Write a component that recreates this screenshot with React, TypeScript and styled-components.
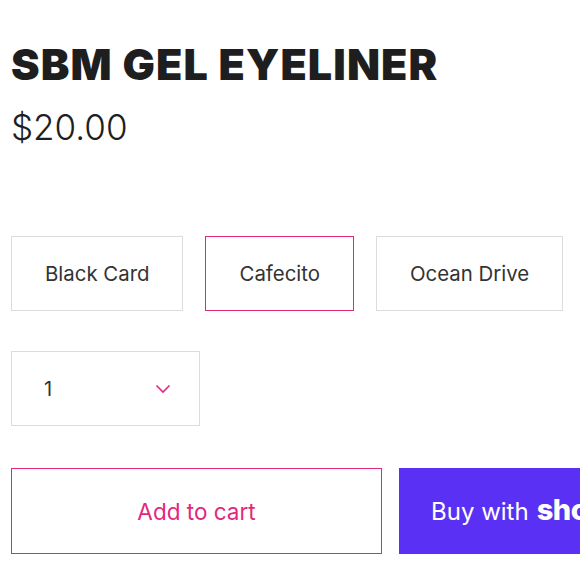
import React, { useState } from "react";
import styled, { createGlobalStyle } from "styled-components";

const GlobalStyle = createGlobalStyle`
  html, body {
    margin: 0;
    padding: 0;
    background: #fff;
    overflow: hidden;
  }
  body {
    font-family: Inter, "Noto Sans", sans-serif;
    color: #222;
  }
`;

const pink = "#e3277d";

const Page = styled.div`
  padding: 37px 11px 0;
  width: 800px;
`;

const Title = styled.h1`
  margin: 0;
  font-family: Inter, "Liberation Sans", sans-serif;
  font-weight: 900;
  font-size: 43px;
  line-height: 54px;
  letter-spacing: 1.1px;
  color: #1e1e1e;
`;

const Price = styled.div`
  margin-top: 14px;
  font-size: 35px;
  font-weight: 300;
  line-height: 44px;
  color: #1e1e1e;
`;

const Variants = styled.div`
  display: flex;
  gap: 22px;
  margin-top: 87px;
`;

const Variant = styled.button<{ $active?: boolean }>`
  height: 75px;
  padding: 0 33px;
  background: #fff;
  border: 1px solid ${({ $active }) => ($active ? pink : "#dcdcdc")};
  font-family: Inter, "Noto Sans", sans-serif;
  font-size: 20.4px;
  color: #333;
  cursor: pointer;
`;

const QtySelect = styled.div`
  margin-top: 40px;
  width: 189px;
  height: 75px;
  box-sizing: border-box;
  border: 1px solid #dcdcdc;
  display: flex;
  align-items: center;
  justify-content: space-between;
  padding: 0 28px 0 32px;
  font-size: 20px;
  color: #333;
`;

const Actions = styled.div`
  display: flex;
  gap: 17px;
  margin-top: 42px;
`;

const CartButton = styled.button`
  width: 371px;
  height: 86px;
  background: #fff;
  border: 1px solid ${pink};
  color: ${pink};
  font-family: Inter, "Noto Sans", sans-serif;
  font-size: 22.5px;
  cursor: pointer;
`;

const ShopButton = styled.button`
  width: 371px;
  height: 86px;
  padding: 0 0 0 32px;
  background: #5a31f4;
  border: none;
  color: #fff;
  font-family: Inter, "Noto Sans", sans-serif;
  font-size: 24px;
  display: flex;
  align-items: center;
  justify-content: flex-start;
  gap: 8px;
  cursor: pointer;
`;

const ShopWord = styled.span`
  font-weight: 800;
  font-size: 29px;
  letter-spacing: -0.5px;
  margin-top: -3px;
`;

const variants = ["Black Card", "Cafecito", "Ocean Drive"];

export default function App() {
  const [selected, setSelected] = useState("Cafecito");
  return (
    <Page>
      <GlobalStyle />
      <Title>SBM GEL EYELINER</Title>
      <Price>$20.00</Price>
      <Variants>
        {variants.map((v) => (
          <Variant key={v} $active={v === selected} onClick={() => setSelected(v)}>
            {v}
          </Variant>
        ))}
      </Variants>
      <QtySelect>
        <span>1</span>
        <svg width="16" height="10" viewBox="0 0 16 10" fill="none">
          <path d="M1.5 1.5 L8 8 L14.5 1.5" stroke={pink} strokeWidth="1.6" />
        </svg>
      </QtySelect>
      <Actions>
        <CartButton>Add to cart</CartButton>
        <ShopButton>
          Buy with <ShopWord>shop</ShopWord>
        </ShopButton>
      </Actions>
    </Page>
  );
}
